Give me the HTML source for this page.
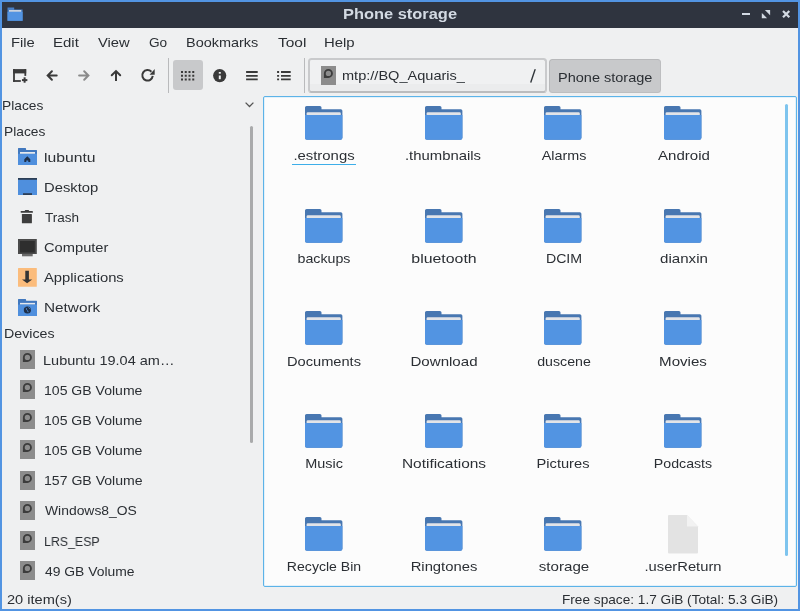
<!DOCTYPE html>
<html><head><meta charset="utf-8">
<style>
*{margin:0;padding:0;box-sizing:border-box}
html,body{width:800px;height:611px;overflow:hidden;background:#5294e2}
body{position:relative;font-family:"Liberation Sans",sans-serif;font-size:14px;color:#31363b}
.abs{position:absolute}
.t{position:absolute;will-change:transform;transform-origin:0 0;font-size:13.33px;line-height:16px;white-space:nowrap;color:#2b2f34}
.ctr{text-align:center;width:160px;transform-origin:80px 0}
#win{position:absolute;left:2px;top:2px;width:796px;height:607px;background:#eff0f1;overflow:hidden}
#title{position:absolute;left:2px;top:2px;width:796px;height:26px;background:#2f343f}
svg{position:absolute;overflow:visible}
</style></head><body>
<svg width="0" height="0" style="position:absolute"><defs>
<g id="drv"><rect x="0" y="0" width="15" height="19" fill="#8c8c8c"/><path d="M2.9 11.9V7.4A4.5 4.5 0 1 1 7.4 11.9zM4.75 7.4A2.65 2.65 0 1 0 10.05 7.4A2.65 2.65 0 1 0 4.75 7.4z" fill="#3c3c3c" fill-rule="evenodd"/></g>
<g id="fld"><path d="M0 1.6Q0 0 1.6 0H14.9Q16.5 0 16.5 1.6V3.2H35.8Q37.4 3.2 37.4 4.8V31.8Q37.4 33.8 35.4 33.8H2Q0 33.8 0 31.8z" fill="#4877b1"/>
<path d="M1.6 7.4Q1.6 6.2 2.8 6.2H34.6Q35.8 6.2 35.8 7.4V10H1.6z" fill="#e2e4e8"/>
<path d="M0 9.1H37.4V31.8Q37.4 33.8 35.4 33.8H2Q0 33.8 0 31.8z" fill="#5294e2"/></g>
</defs></svg>
<div id="win"></div>
<div id="title"></div>

<svg style="left:7px;top:7px" width="16" height="14" viewBox="0 0 16 14">
  <path d="M0.5 0.5h6.7v2H15.6v11.2H0.5z" fill="#4a7fc4"/>
  <rect x="2" y="3" width="12.2" height="1.9" fill="#c9d3df"/>
  <rect x="0.5" y="4.8" width="15.1" height="9" fill="#5294e2"/>
</svg>
<div class="abs" style="left:342.6px;top:6px;font-weight:bold;font-size:14px;line-height:16px;white-space:nowrap;color:#d3dae3;will-change:transform;transform:scaleX(1.1726);transform-origin:0 0">Phone storage</div>
<div class="abs" style="left:742px;top:13px;width:8px;height:2px;background:#d3dae3"></div>
<svg style="left:762px;top:9.9px" width="9" height="9" viewBox="0 0 9 9">
  <path d="M2.9 0H8.1V5.2z" fill="#d3dae3"/>
  <path d="M-0.2 2.9V8.15H5.05z" fill="#d3dae3"/>
</svg>
<svg style="left:781.8px;top:9.9px" width="9" height="9" viewBox="0 0 9 9">
  <path d="M1 1L7.3 7.3M7.3 1L1 7.3" stroke="#d3dae3" stroke-width="2.2"/>
</svg>

<div class="t" style="left:10.77px;top:34.80px;transform:scaleX(1.1075);">File</div>
<div class="t" style="left:53.25px;top:34.80px;transform:scaleX(1.1235);">Edit</div>
<div class="t" style="left:97.93px;top:34.80px;transform:scaleX(1.1077);">View</div>
<div class="t" style="left:148.77px;top:34.80px;transform:scaleX(1.0238);">Go</div>
<div class="t" style="left:185.80px;top:34.80px;transform:scaleX(1.0847);">Bookmarks</div>
<div class="t" style="left:277.64px;top:34.80px;transform:scaleX(1.1620);">Tool</div>
<div class="t" style="left:323.76px;top:34.80px;transform:scaleX(1.1188);">Help</div>
<svg style="left:13px;top:69px" width="15" height="14" viewBox="0 0 15 14">
  <g fill="#3a3a3a"><rect x="0.1" y="0.1" width="13.1" height="4.3"/><rect x="0.1" y="0.1" width="1.8" height="12.8"/><rect x="0.1" y="11.1" width="7.7" height="1.8"/><rect x="11.4" y="0.1" width="1.8" height="6.8"/><rect x="8.95" y="10.1" width="5.4" height="2"/><rect x="10.6" y="8.3" width="2" height="5.4"/></g>
</svg>
<svg style="left:42px;top:66px" width="20" height="20" viewBox="0 0 20 20">
  <path d="M14.7 9.5H6M9.9 5.3L5.7 9.5L9.9 13.7" fill="none" stroke="#3a3a3a" stroke-width="2" stroke-linecap="round"/>
</svg>
<svg style="left:74px;top:66px" width="20" height="20" viewBox="0 0 20 20">
  <path d="M5.1 9.5H14M10.2 5.3L14.4 9.5L10.2 13.7" fill="none" stroke="#8a8a8a" stroke-width="2" stroke-linecap="round"/>
</svg>
<svg style="left:106px;top:66px" width="20" height="20" viewBox="0 0 20 20">
  <path d="M10 14.9V6" fill="none" stroke="#3a3a3a" stroke-width="2"/>
  <path d="M5.75 9.3L10 5.1L14.2 9.3" fill="none" stroke="#3a3a3a" stroke-width="2" stroke-linecap="round"/>
</svg>
<svg style="left:138px;top:66px" width="20" height="20" viewBox="0 0 20 20">
  <path d="M13.4 5.75A5.25 5.25 0 1 0 14.75 9.98" fill="none" stroke="#3a3a3a" stroke-width="2"/>
  <path d="M16.7 3.1V8.7H11.6z" fill="#3a3a3a"/>
</svg>
<div class="abs" style="left:168px;top:57.5px;width:1px;height:35px;background:#b9babc"></div>
<div class="abs" style="left:173px;top:60.3px;width:29.6px;height:30px;background:#c8c9cb;border-radius:3px"></div>
<svg style="left:181px;top:70.6px" width="14" height="10" viewBox="0 0 14 10">
  <g fill="#3a3a3a">
  <rect x="0" y="0" width="2" height="2"/><rect x="3.75" y="0" width="2" height="2"/><rect x="7.5" y="0" width="2" height="2"/><rect x="11.25" y="0" width="2" height="2"/>
  <rect x="0" y="3.75" width="2" height="2"/><rect x="3.75" y="3.75" width="2" height="2"/><rect x="7.5" y="3.75" width="2" height="2"/><rect x="11.25" y="3.75" width="2" height="2"/>
  <rect x="0" y="7.5" width="2" height="2"/><rect x="3.75" y="7.5" width="2" height="2"/><rect x="7.5" y="7.5" width="2" height="2"/><rect x="11.25" y="7.5" width="2" height="2"/>
  </g>
</svg>
<svg style="left:213px;top:68.7px" width="14" height="14" viewBox="0 0 14 14">
  <circle cx="6.7" cy="6.6" r="6.6" fill="#3a3a3a"/>
  <rect x="5.8" y="3.0" width="2" height="1.7" fill="#eff0f1"/>
  <rect x="5.8" y="6.5" width="2" height="3.7" fill="#eff0f1"/>
</svg>
<svg style="left:246px;top:70.8px" width="12" height="10" viewBox="0 0 12 10">
  <path d="M0.1 1h11.6M0.1 4.8h11.6M0.1 8.4h11.6" stroke="#3a3a3a" stroke-width="1.8"/>
</svg>
<svg style="left:277px;top:70.8px" width="15" height="10" viewBox="0 0 15 10">
  <path d="M0.1 1h2M0.1 4.8h2M0.1 8.4h2M4 1h9.7M4 4.8h9.7M4 8.4h9.7" stroke="#3a3a3a" stroke-width="1.8"/>
</svg>
<div class="abs" style="left:304px;top:57.5px;width:1px;height:35px;background:#b9babc"></div>
<div class="abs" style="left:308.2px;top:57.9px;width:238.8px;height:34.8px;border:2px solid #c9cacc;border-bottom-color:#bbbcbe;border-radius:3.5px;background:linear-gradient(#f0f1f2 0,#f0f1f2 24px,#ebeced 24px)"></div>
<svg style="left:321px;top:66px" width="15" height="19" viewBox="0 0 15 19"><use href="#drv"/></svg>

<div class="t" style="left:341.90px;top:68.00px;transform:scaleX(1.0920);">mtp://BQ_Aquaris_</div>
<svg style="left:520px;top:62px" width="30" height="30" viewBox="0 0 30 30"><path d="M10.9 20L15 7.7" stroke="#31363b" stroke-width="1.4" stroke-linecap="round"/></svg>
<div class="abs" style="left:549px;top:58.9px;width:112.2px;height:34px;border:1.5px solid #b8b9bb;border-right-color:#bdbec0;border-bottom-color:#bdbec0;border-radius:3.5px;background:#c8c9cb"></div>
<div class="t" style="left:557.59px;top:69.60px;transform:scaleX(1.0885);">Phone storage</div>
<div class="t" style="left:2.45px;top:98.00px;transform:scaleX(1.0332);">Places</div>
<div class="t" style="left:4.05px;top:123.50px;transform:scaleX(1.0332);">Places</div>
<svg style="left:245.3px;top:102px" width="10" height="6" viewBox="0 0 10 6">
  <path d="M0.6 0.6L4.5 4.5L8.4 0.6" fill="none" stroke="#555" stroke-width="1.3"/>
</svg>
<div class="abs" style="left:250px;top:126px;width:3px;height:317px;background:#a9aaab;border-radius:1.5px"></div>
<svg style="left:18px;top:148px" width="19" height="17" viewBox="0 0 19 17">
  <path d="M0 0.5Q0 0 0.5 0H7.8L8.2 2H18.5Q19 2 19 2.5V17H0z" fill="#4178be"/>
  <rect x="2" y="4" width="15" height="1.9" fill="#e6e9ee"/>
  <rect x="0" y="5.8" width="19" height="11.2" fill="#4f8fdd"/>
  <path d="M6.3 11.3L9.3 8.2L12.3 11.3V14H10.3V12.4H8.3V14H6.3z" fill="#1e2f48"/>
</svg>
<svg style="left:18px;top:178px" width="19" height="17" viewBox="0 0 19 17">
  <rect x="0" y="0" width="19" height="17" fill="#4f8fdd"/>
  <rect x="0" y="0" width="19" height="1.8" fill="#2c3e55"/>
  <rect x="5" y="15.2" width="9" height="1.8" fill="#2c3e55"/>
</svg>
<svg style="left:20px;top:209px" width="14" height="15" viewBox="0 0 14 15">
  <rect x="4.8" y="0.9" width="4.2" height="1.6" rx="0.7" fill="#3d3d3d"/>
  <rect x="0.7" y="2.1" width="12.2" height="1.75" rx="0.4" fill="#3d3d3d"/>
  <rect x="1.9" y="5" width="10" height="9.25" rx="0.5" fill="#3d3d3d"/>
</svg>
<svg style="left:18px;top:238.5px" width="19" height="18" viewBox="0 0 19 18">
  <rect x="0" y="0" width="18.8" height="15" fill="#4a4a4a"/>
  <rect x="2" y="2" width="14.8" height="11.5" fill="#2e2e2e"/>
  <rect x="4" y="15" width="10.7" height="2.3" fill="#6a6a6a"/>
</svg>
<svg style="left:18px;top:268px" width="19" height="19" viewBox="0 0 19 19">
  <rect x="0" y="0" width="18.8" height="18.8" fill="#fbbc7c" rx="0.5"/>
  <path d="M7.3 2.8h3.6V11.4h3.3L9.1 15.3L4 11.4h3.3z" fill="#343434"/>
</svg>
<svg style="left:18px;top:299px" width="19" height="17" viewBox="0 0 19 17">
  <path d="M0 0.5Q0 0 0.5 0H7.8L8.2 1.8H18.5Q19 1.8 19 2.3V17H0z" fill="#4178be"/>
  <rect x="2" y="3.9" width="15" height="1.7" fill="#e6e9ee"/>
  <rect x="0" y="5.6" width="19" height="11.4" fill="#4f8fdd"/>
  <circle cx="9.4" cy="11" r="3.6" fill="#1e2f48"/>
  <path d="M7.8 8.8Q9 9.6 8.6 10.8Q9.8 11.4 10.2 13.2M10.6 8.4Q11.2 9.6 12.4 10" fill="none" stroke="#4f8fdd" stroke-width="0.9"/>
</svg>

<div class="t" style="left:43.85px;top:149.70px;transform:scaleX(1.1785);">lubuntu</div>
<div class="t" style="left:43.67px;top:179.84px;transform:scaleX(1.1098);">Desktop</div>
<div class="t" style="left:44.98px;top:209.98px;transform:scaleX(1.0135);">Trash</div>
<div class="t" style="left:44.11px;top:240.40px;transform:scaleX(1.1008);">Computer</div>
<div class="t" style="left:44.21px;top:270.40px;transform:scaleX(1.1100);">Applications</div>
<div class="t" style="left:43.62px;top:300.40px;transform:scaleX(1.1509);">Network</div>
<div class="t" style="left:3.82px;top:326.00px;transform:scaleX(1.0675);">Devices</div>
<svg style="left:20px;top:350.00px" width="15" height="19" viewBox="0 0 15 19"><use href="#drv"/></svg>
<div class="t" style="left:43.44px;top:352.75px;transform:scaleX(1.0879);">Lubuntu 19.04 am…</div>
<svg style="left:20px;top:380.14px" width="15" height="19" viewBox="0 0 15 19"><use href="#drv"/></svg>
<div class="t" style="left:44.23px;top:382.89px;transform:scaleX(1.0542);">105 GB Volume</div>
<svg style="left:20px;top:410.28px" width="15" height="19" viewBox="0 0 15 19"><use href="#drv"/></svg>
<div class="t" style="left:44.23px;top:413.03px;transform:scaleX(1.0542);">105 GB Volume</div>
<svg style="left:20px;top:440.42px" width="15" height="19" viewBox="0 0 15 19"><use href="#drv"/></svg>
<div class="t" style="left:44.23px;top:443.17px;transform:scaleX(1.0542);">105 GB Volume</div>
<svg style="left:20px;top:470.56px" width="15" height="19" viewBox="0 0 15 19"><use href="#drv"/></svg>
<div class="t" style="left:43.82px;top:473.31px;transform:scaleX(1.0564);">157 GB Volume</div>
<svg style="left:20px;top:500.70px" width="15" height="19" viewBox="0 0 15 19"><use href="#drv"/></svg>
<div class="t" style="left:44.65px;top:503.45px;transform:scaleX(1.0421);">Windows8_OS</div>
<svg style="left:20px;top:530.84px" width="15" height="19" viewBox="0 0 15 19"><use href="#drv"/></svg>
<div class="t" style="left:43.87px;top:533.59px;transform:scaleX(0.9278);">LRS_ESP</div>
<svg style="left:20px;top:560.98px" width="15" height="19" viewBox="0 0 15 19"><use href="#drv"/></svg>
<div class="t" style="left:44.56px;top:563.73px;transform:scaleX(1.0419);">49 GB Volume</div>
<div class="abs" style="left:263px;top:96px;width:534px;height:491px;border:1px solid #5cb3e8;border-radius:2px;background:#fcfcfc;box-shadow:inset 0 0 0 1px #e3f1fa"></div>
<svg style="left:304.90px;top:105.80px" width="38" height="34" viewBox="0 0 38 34"><use href="#fld"/></svg>
<div class="t ctr" style="left:243.63px;top:148.00px;transform:scaleX(1.1168)">.estrongs</div>
<svg style="left:424.60px;top:105.80px" width="38" height="34" viewBox="0 0 38 34"><use href="#fld"/></svg>
<div class="t ctr" style="left:363.34px;top:148.00px;transform:scaleX(1.1155)">.thumbnails</div>
<svg style="left:544.30px;top:105.80px" width="38" height="34" viewBox="0 0 38 34"><use href="#fld"/></svg>
<div class="t ctr" style="left:483.80px;top:148.00px;transform:scaleX(1.0774)">Alarms</div>
<svg style="left:664.00px;top:105.80px" width="38" height="34" viewBox="0 0 38 34"><use href="#fld"/></svg>
<div class="t ctr" style="left:603.82px;top:148.00px;transform:scaleX(1.1266)">Android</div>
<svg style="left:304.90px;top:208.50px" width="38" height="34" viewBox="0 0 38 34"><use href="#fld"/></svg>
<div class="t ctr" style="left:243.65px;top:250.75px;transform:scaleX(1.0660)">backups</div>
<svg style="left:424.60px;top:208.50px" width="38" height="34" viewBox="0 0 38 34"><use href="#fld"/></svg>
<div class="t ctr" style="left:363.78px;top:250.75px;transform:scaleX(1.1917)">bluetooth</div>
<svg style="left:544.30px;top:208.50px" width="38" height="34" viewBox="0 0 38 34"><use href="#fld"/></svg>
<div class="t ctr" style="left:483.55px;top:250.75px;transform:scaleX(1.0630)">DCIM</div>
<svg style="left:664.00px;top:208.50px" width="38" height="34" viewBox="0 0 38 34"><use href="#fld"/></svg>
<div class="t ctr" style="left:603.50px;top:250.75px;transform:scaleX(1.1304)">dianxin</div>
<svg style="left:304.90px;top:311.20px" width="38" height="34" viewBox="0 0 38 34"><use href="#fld"/></svg>
<div class="t ctr" style="left:243.67px;top:353.50px;transform:scaleX(1.0987)">Documents</div>
<svg style="left:424.60px;top:311.20px" width="38" height="34" viewBox="0 0 38 34"><use href="#fld"/></svg>
<div class="t ctr" style="left:363.70px;top:353.50px;transform:scaleX(1.1320)">Download</div>
<svg style="left:544.30px;top:311.20px" width="38" height="34" viewBox="0 0 38 34"><use href="#fld"/></svg>
<div class="t ctr" style="left:483.66px;top:353.50px;transform:scaleX(1.0641)">duscene</div>
<svg style="left:664.00px;top:311.20px" width="38" height="34" viewBox="0 0 38 34"><use href="#fld"/></svg>
<div class="t ctr" style="left:603.10px;top:353.50px;transform:scaleX(1.1317)">Movies</div>
<svg style="left:304.90px;top:413.90px" width="38" height="34" viewBox="0 0 38 34"><use href="#fld"/></svg>
<div class="t ctr" style="left:243.70px;top:456.25px;transform:scaleX(1.0842)">Music</div>
<svg style="left:424.60px;top:413.90px" width="38" height="34" viewBox="0 0 38 34"><use href="#fld"/></svg>
<div class="t ctr" style="left:363.54px;top:456.25px;transform:scaleX(1.1593)">Notifications</div>
<svg style="left:544.30px;top:413.90px" width="38" height="34" viewBox="0 0 38 34"><use href="#fld"/></svg>
<div class="t ctr" style="left:483.25px;top:456.25px;transform:scaleX(1.0996)">Pictures</div>
<svg style="left:664.00px;top:413.90px" width="38" height="34" viewBox="0 0 38 34"><use href="#fld"/></svg>
<div class="t ctr" style="left:603.24px;top:456.25px;transform:scaleX(1.0633)">Podcasts</div>
<svg style="left:304.90px;top:516.60px" width="38" height="34" viewBox="0 0 38 34"><use href="#fld"/></svg>
<div class="t ctr" style="left:243.83px;top:559.00px;transform:scaleX(1.0551)">Recycle Bin</div>
<svg style="left:424.60px;top:516.60px" width="38" height="34" viewBox="0 0 38 34"><use href="#fld"/></svg>
<div class="t ctr" style="left:363.52px;top:559.00px;transform:scaleX(1.1111)">Ringtones</div>
<svg style="left:544.30px;top:516.60px" width="38" height="34" viewBox="0 0 38 34"><use href="#fld"/></svg>
<div class="t ctr" style="left:483.64px;top:559.00px;transform:scaleX(1.1339)">storage</div>
<svg style="left:668px;top:514.8px" width="30" height="39" viewBox="0 0 30 39"><path d="M1 0H19L30 11.5V37.4Q30 38.4 29 38.4H1Q0 38.4 0 37.4V1Q0 0 1 0z" fill="#e3e3e3"/><path d="M19 0L30 11.5H19z" fill="#f2f2f2"/></svg>
<div class="t ctr" style="left:603.21px;top:559.00px;transform:scaleX(1.1061)">.userReturn</div>
<div class="abs" style="left:292.2px;top:163.8px;width:63.5px;height:1.2px;background:#3daee9"></div>
<div class="abs" style="left:785px;top:103.7px;width:3px;height:452px;background:#7ec4ee;border-radius:1.5px"></div>
<div class="t" style="left:7.14px;top:592.40px;transform:scaleX(1.0951);">20 item(s)</div>
<div class="t" style="left:561.96px;top:592.40px;transform:scaleX(1.0234);">Free space: 1.7 GiB (Total: 5.3 GiB)</div>
</body></html>
